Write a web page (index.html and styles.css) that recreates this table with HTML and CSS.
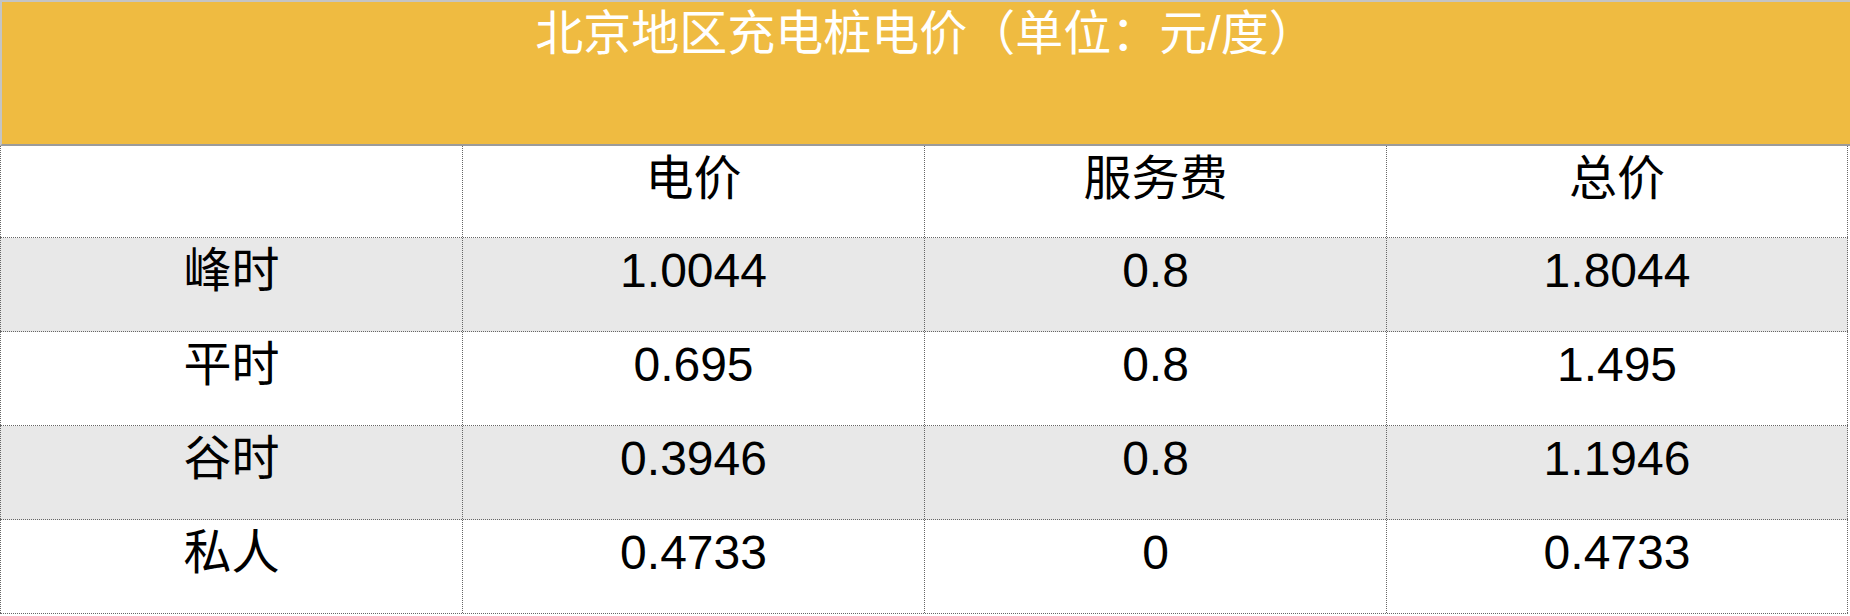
FILE: index.html
```html
<!DOCTYPE html>
<html lang="zh-CN">
<head>
<meta charset="utf-8">
<title>北京地区充电桩电价</title>
<link rel="stylesheet" href="styles.css">
</head>
<body>
<div class="sheet">
  <div class="title">北京地区充电桩电价（单位：元/度）</div>
  <div class="grid">
    <div class="row head">
      <div class="cell"></div>
      <div class="cell">电价</div>
      <div class="cell">服务费</div>
      <div class="cell">总价</div>
    </div>
    <div class="row shade">
      <div class="cell">峰时</div>
      <div class="cell">1.0044</div>
      <div class="cell">0.8</div>
      <div class="cell">1.8044</div>
    </div>
    <div class="row">
      <div class="cell">平时</div>
      <div class="cell">0.695</div>
      <div class="cell">0.8</div>
      <div class="cell">1.495</div>
    </div>
    <div class="row shade">
      <div class="cell">谷时</div>
      <div class="cell">0.3946</div>
      <div class="cell">0.8</div>
      <div class="cell">1.1946</div>
    </div>
    <div class="row">
      <div class="cell">私人</div>
      <div class="cell">0.4733</div>
      <div class="cell">0</div>
      <div class="cell">0.4733</div>
    </div>
  </div>
</div>
</body>
</html>
```

FILE: styles.css
```css
html, body {
  margin: 0;
  padding: 0;
  background: #ffffff;
}

.sheet {
  width: 1850px;
  font-family: "Liberation Sans", "Noto Sans CJK SC", sans-serif;
}

.title {
  box-sizing: border-box;
  height: 146px;
  background: #efbb41;
  border-top: 2px solid #c4c4c4;
  border-left: 2px solid #c4c4c4;
  border-bottom: 2px solid #9b9b9b;
  color: #ffffff;
  font-size: 48px;
  line-height: 60px;
  padding-top: 2px;
  text-align: center;
}

.grid {
  width: 1848px;
}

.row {
  box-sizing: border-box;
  display: grid;
  grid-template-columns: repeat(4, 1fr);
  height: 94px;
  border-bottom: 1px dotted #666666;
}

.row.head {
  height: 92px;
}

.row.shade {
  background: #e8e8e8;
}

.cell {
  border-left: 1px dotted #666666;
  color: #000000;
  font-size: 48px;
  line-height: 56px;
  padding-top: 5px;
  text-align: center;
}

.cell:last-child {
  border-right: 1px dotted #666666;
}
```
